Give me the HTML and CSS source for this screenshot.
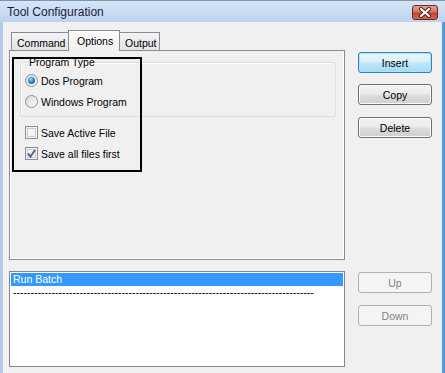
FILE: index.html
```html
<!DOCTYPE html>
<html lang="en">
<head>
    <meta charset="UTF-8">
    <title>Tool Configuration</title>
    <link rel="stylesheet" href="styles.css">
</head>
<body>
<div class="window">
    <div class="titlebar">
        <span class="title">Tool Configuration</span>
        <div class="close">
            <svg width="14" height="11" viewBox="0 0 14 11">
                <path d="M3 2 L11 9 M11 2 L3 9" stroke="#5a1a12" stroke-width="4" stroke-linecap="round"/>
                <path d="M3 2 L11 9 M11 2 L3 9" stroke="#fff" stroke-width="2.2" stroke-linecap="round"/>
            </svg>
        </div>
    </div>

    <div class="client">
        <div class="top-left">
            <div class="tabs">
                <div class="tab tab-cmd">Command</div>
                <div class="tab tab-opt active">Options</div>
                <div class="tab tab-out">Output</div>
            </div>
            <div class="panel">
                <fieldset class="group">
                    <legend>Program Type</legend>
                    <div class="row"><span class="radio on"></span>Dos Program</div>
                    <div class="row"><span class="radio"></span>Windows Program</div>
                </fieldset>
                <div class="checks">
                    <div class="row"><span class="check"></span>Save Active File</div>
                    <div class="row"><span class="check on">
                        <svg width="11" height="11" viewBox="0 0 11 11"><path d="M2 5.5 L4.5 8.5 L9 2" fill="none" stroke="#4b6a9a" stroke-width="2"/></svg>
                    </span>Save all files first</div>
                </div>
            </div>
        </div>

        <div class="btns btns-top">
            <div class="btn default">Insert</div>
            <div class="btn">Copy</div>
            <div class="btn btn-del">Delete</div>
        </div>

        <div class="list">
            <div class="item sel">Run Batch</div>
            <div class="item">--------------------------------------------------------------------------------------</div>
        </div>

        <div class="btns btns-bottom">
            <div class="btn off">Up</div>
            <div class="btn off">Down</div>
        </div>
    </div>

    <!-- marker box drawn over the options -->
    <div class="mark"></div>
</div>
</body>
</html>
```

FILE: styles.css
```css
html, body {
    margin: 0;
    padding: 0;
    overflow: hidden;
    background: #f0f0f0;
}
body {
    font-family: "Liberation Sans", Arial, sans-serif;
    font-size: 10.5px;
    color: #000;
}
.window {
    position: relative;
    width: 445px;
    height: 373px;
    box-sizing: border-box;
    border-left: 3px solid #b3cbe8;
    border-right: 3px solid #4a9ee6;
    background: #f0f0f0;
}
.titlebar {
    height: 22px;
    margin-left: -3px;
    margin-right: -3px;
    padding: 0 7px;
    box-sizing: border-box;
    display: flex;
    align-items: center;
    justify-content: space-between;
    background: linear-gradient(to bottom, #d6e5f6, #bdd3ed);
    border-top: 1px solid #7d93b0;
}
.title {
    font-size: 12px;
    color: #1d1b42;
    padding-top: 1px;
}
.close {
    width: 26px;
    height: 15px;
    box-sizing: border-box;
    margin-right: 0;
    border: 1px solid #6e2a20;
    border-radius: 3px;
    background: linear-gradient(to bottom, #e0a196 0%, #d27563 45%, #c2432d 55%, #d36a50 100%);
    display: flex;
    align-items: center;
    justify-content: center;
    margin-top: 2px;
}
.close svg { display: block; }

.client {
    display: grid;
    grid-template-columns: 336px 74px;
    column-gap: 13px;
    row-gap: 11px;
    padding: 8px 0 0 6px;
}

/* tabs */
.tabs {
    height: 20px;
    display: flex;
    align-items: flex-end;
    padding-left: 2px;
}
.tab {
    height: 18px;
    box-sizing: border-box;
    border: 1px solid #898c95;
    border-bottom: none;
    background: linear-gradient(to bottom, #f4f4f4, #e4e4e4);
    padding: 4px 0 0 5px;
    white-space: nowrap;
}
.tab-cmd { width: 58px; }
.tab-opt { width: 52px; margin-left: -1px; }
.tab-out { width: 41px; margin-left: -1px; }
.tab.active {
    position: relative;
    z-index: 1;
    height: 21px;
    margin-bottom: -1px;
    padding: 4px 0 0 8px;
    background: linear-gradient(to bottom, #fdfdfd, #f0f0f0);
}
.tab-out { padding-left: 5px; }

.panel {
    height: 210px;
    box-sizing: border-box;
    border: 1px solid #898c95;
    box-shadow: inset 1px 0 #fff, inset -1px -1px #fff;
    background: #f0f0f0;
    padding: 5px 0 0 0;
}
.group {
    margin: 0 0 0 10px;
    width: 316px;
    height: 61px;
    box-sizing: border-box;
    border: 1px solid #d5dfe5;
    border-radius: 3px;
    box-shadow: inset 1px 1px #fff;
    padding: 1px 0 0 4px;
}
.group legend {
    padding: 0 2px;
    margin-left: 2px;
    line-height: 13px;
}
.row {
    height: 21px;
    display: flex;
    align-items: center;
    white-space: nowrap;
}
.radio {
    width: 13px;
    height: 13px;
    box-sizing: border-box;
    border: 1px solid #8e8f8f;
    border-radius: 50%;
    background: linear-gradient(135deg, #d8d8d8, #fbfbfb);
    margin-right: 3px;
    display: flex;
    align-items: center;
    justify-content: center;
}
.radio.on::after {
    content: "";
    width: 7px;
    height: 7px;
    border-radius: 50%;
    background: radial-gradient(circle at 40% 35%, #9be0ff 0, #2b86cf 45%, #0f4a8a 100%);
}
.checks {
    padding: 5px 0 0 15px;
}
.check {
    width: 13px;
    height: 13px;
    box-sizing: border-box;
    border: 1px solid #8e8f8f;
    background: #f4f4f4;
    box-shadow: inset 0 0 0 1px #f4f4f4, inset 0 0 0 2px #c9cbce;
    margin-right: 3px;
    display: flex;
    align-items: center;
    justify-content: center;
}
.check svg { display: block; }

/* buttons */
.btns {
    display: flex;
    flex-direction: column;
}
.btns-top { padding-top: 22px; }
.btns-bottom { padding-top: 1px; gap: 12px; }
.btn {
    height: 21px;
    box-sizing: border-box;
    border: 1px solid #707070;
    border-radius: 3px;
    background: linear-gradient(to bottom, #f2f2f2 0%, #ebebeb 48%, #dddddd 52%, #cfcfcf 100%);
    box-shadow: inset 0 0 0 1px #fbfbfb;
    display: flex;
    align-items: center;
    justify-content: center;
    margin-bottom: 11px;
}
.btns-bottom .btn { margin-bottom: 0; }
.btn-del { margin-top: 1px; }
.btn.default {
    border-color: #3c7fb1;
    background: linear-gradient(to bottom, #eaf6fd 0%, #d9f0fc 48%, #bee6fd 52%, #a7d9f5 100%);
    box-shadow: inset 0 0 0 1px #a8e3fb;
}
.btn.off {
    border-color: #adb2b5;
    background: #f4f4f4;
    box-shadow: none;
    color: #838383;
}

/* list */
.list {
    height: 96px;
    box-sizing: border-box;
    border: 1px solid #828790;
    background: #fff;
    padding: 1px;
    overflow: hidden;
}
.item {
    line-height: 13px;
    height: 13px;
    padding-left: 2px;
    white-space: nowrap;
    overflow: hidden;
}
.item.sel {
    background: #3399ff;
    color: #fff;
}

.mark {
    position: absolute;
    left: 9px;
    top: 57px;
    width: 130px;
    height: 115px;
    box-sizing: border-box;
    border: 2px solid #000;
}
```
